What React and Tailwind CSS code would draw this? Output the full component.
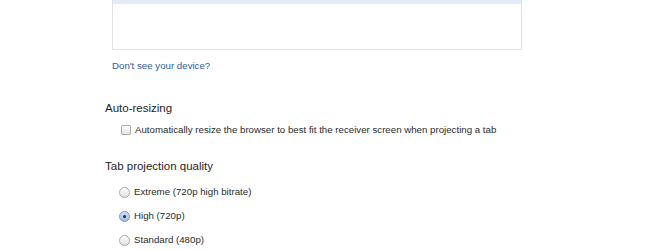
export default function App() {
  const font = { fontFamily: '"Liberation Sans", Arial, sans-serif' };
  const Radio = ({ checked, label }) => (
    <div className="flex items-center h-[12px] pl-[14px]">
      <span
        className={
          "w-[11px] h-[11px] rounded-full border flex items-center justify-center " +
          (checked
            ? "border-[#7c93bd] bg-gradient-to-b from-[#d4e2f7] to-[#9dbbe6]"
            : "border-[#a8a8a8] bg-gradient-to-b from-[#fdfdfd] to-[#e4e4e4]")
        }
      >
        {checked && <span className="w-[3px] h-[3px] rounded-full bg-[#1c2a44]" />}
      </span>
      <span className="ml-[4px] text-[9.7px] leading-[12px] text-[#2a2a2a]">{label}</span>
    </div>
  );
  return (
    <div className="w-[650px] h-[250px] bg-white overflow-hidden" style={font}>
      <div className="pl-[105px]">
        <div className="ml-[7px] w-[410px] h-[50px] border-x border-b border-[#e2e2e2] bg-white">
          <div className="h-[4px] bg-[#e5ebf6]" />
        </div>
        <div className="ml-[7px] mt-[10px] text-[9.7px] leading-[12px] text-[#2d5aa6]">
          Don't see your device?
        </div>
        <div className="mt-[29px] text-[11.5px] leading-[14px] text-[#1e1e1e]">Auto-resizing</div>
        <div className="mt-[9px] flex items-center h-[12px] pl-[16px]">
          <span className="w-[10px] h-[10px] rounded-[2px] border border-[#a8a8a8] bg-gradient-to-b from-[#fdfdfd] to-[#e6e6e6]" />
          <span className="ml-[4px] text-[9.7px] leading-[12px] text-[#2a2a2a]">
            Automatically resize the browser to best fit the receiver screen when projecting a tab
          </span>
        </div>
        <div className="mt-[23px] text-[11.5px] leading-[14px] text-[#1e1e1e]">Tab projection quality</div>
        <div className="mt-[13px] flex flex-col gap-[12px]">
          <Radio label="Extreme (720p high bitrate)" />
          <Radio checked label="High (720p)" />
          <Radio label="Standard (480p)" />
        </div>
      </div>
    </div>
  );
}
